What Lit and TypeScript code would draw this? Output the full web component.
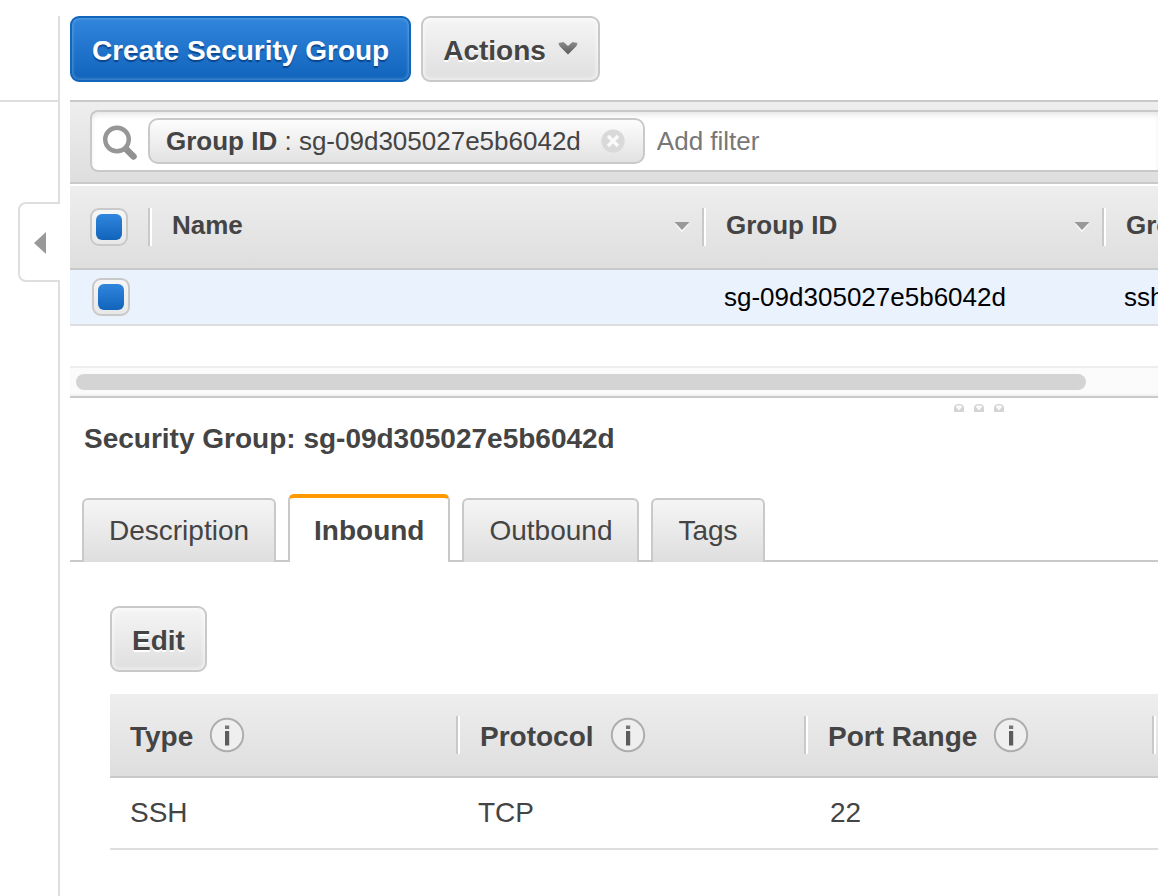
import { LitElement, html, css, svg } from "lit";
import { customElement, state } from "lit/decorators.js";
import { classMap } from "lit/directives/class-map.js";

interface Rule {
  type: string;
  protocol: string;
  ports: string;
}

const searchIcon = svg`<svg class="search-icon" viewBox="0 0 36 36" width="36" height="36" aria-hidden="true">
  <path d="M24 24 L31.500 31.500" stroke="#919191" stroke-width="6.5" stroke-linecap="round"/>
  <circle cx="15" cy="14.5" r="11.8" fill="#fff" stroke="#969696" stroke-width="4.4"/>
</svg>`;

const chevron = svg`<svg viewBox="0 0 20 14" width="20" height="14" aria-hidden="true">
  <defs><linearGradient id="chev" x1="0" y1="0" x2="0" y2="1">
    <stop offset="0" stop-color="#8c8c8c"/><stop offset="1" stop-color="#5a5a5a"/>
  </linearGradient></defs>
  <path d="M0.500 2 L5.500 1 L10 5 L14.500 1 L19.500 2 L18.500 5 L10 13.500 L1.500 5 Z" fill="url(#chev)"/>
</svg>`;

const closeIcon = svg`<svg viewBox="0 0 24 24" width="24" height="24" aria-hidden="true">
  <circle cx="12" cy="12" r="11.600" fill="#d9d9d9"/>
  <path d="M7 7 L17 17 M17 7 L7 17" stroke="#fafafa" stroke-width="3.400"/>
</svg>`;

const sortArrow = svg`<svg viewBox="0 0 16 12" width="16" height="12" aria-hidden="true">
  <path d="M0.500 2.500 H15.500 L8 11.500 Z" fill="#f8f8f8"/>
  <path d="M0.500 1 H15.500 L8 9 Z" fill="#999"/>
</svg>`;

const collapseArrow = svg`<svg viewBox="0 0 14 22" width="14" height="22" aria-hidden="true">
  <path d="M0 11 L12 0 V22 Z" fill="#999"/>
</svg>`;

const infoIcon = svg`<svg viewBox="0 0 36 36" width="36" height="36" aria-hidden="true">
  <circle cx="18" cy="18" r="16.200" fill="#efefef" stroke="#adadad" stroke-width="2"/>
  <rect x="16" y="8.500" width="4.200" height="3.500" fill="#777"/>
  <rect x="16" y="14" width="4.200" height="14.500" fill="#5c5c5c"/>
</svg>`;

const gripDot = svg`<svg viewBox="0 0 10 8" width="10" height="8" aria-hidden="true">
  <path d="M0 8 V4 Q0 0 5 0 Q10 0 10 4 V8 Z" fill="#d4d4d4"/>
  <path d="M1.500 2.500 Q5 0 8.500 2.500 L5 6.500 Z" fill="#fafafa"/>
</svg>`;

@customElement("app-root")
export class AppRoot extends LitElement {
  @state() private activeTab = "Inbound";

  private tabs = ["Description", "Inbound", "Outbound", "Tags"];
  private ruleColumns = ["Type", "Protocol", "Port Range"];
  private rules: Rule[] = [{ type: "SSH", protocol: "TCP", ports: "22" }];
  private groupId = "sg-09d305027e5b6042d";

  static styles = css`
    :host {
      --line: #c9c9c9;
      --soft-line: #dedede;
      --ink: #444;
      display: flex;
      min-height: 100vh;
      box-sizing: border-box;
      overflow: hidden;
      background: #fff;
      color: var(--ink);
      font-family: "Liberation Sans", Arial, sans-serif;
      font-size: 28px;
    }
    * {
      box-sizing: border-box;
    }
    button,
    input {
      margin: 0;
      font: inherit;
      color: inherit;
    }
    svg {
      display: block;
      flex: none;
    }

    .sidebar {
      flex: none;
      display: flex;
      flex-direction: column;
      align-items: flex-end;
      width: 60px;
      padding-top: 16px;
    }
    .rail {
      width: 100%;
      border-right: 2px solid var(--soft-line);
    }
    .rail-top {
      height: 86px;
      border-bottom: 2px solid var(--soft-line);
    }
    .rail-mid {
      height: 100px;
    }
    .rail-rest {
      flex: 1;
    }
    .collapse {
      display: flex;
      align-items: center;
      width: 42px;
      height: 80px;
      padding: 2px 0 0 14px;
      border: 2px solid var(--soft-line);
      border-right: 0;
      border-radius: 8px 0 0 8px;
      background: #fff;
    }

    .main {
      flex: 1;
      min-width: 0;
      margin-left: 10px;
      overflow: hidden;
    }

    .toolbar {
      display: flex;
      gap: 10px;
      padding: 16px 0 18px;
    }
    .btn {
      display: flex;
      align-items: center;
      gap: 12px;
      height: 66px;
      padding: 4px 20px 0;
      border: 2px solid var(--line);
      border-radius: 9px;
      background: linear-gradient(#f5f5f5, #dfdfdf);
      box-shadow: inset 0 0 4px 1px rgba(255, 255, 255, 0.7);
      font-weight: bold;
      text-shadow: 0 2px 0 #fff;
      white-space: nowrap;
    }
    .btn svg {
      margin-bottom: 6px;
    }
    .primary {
      border-color: #1166bb;
      background: linear-gradient(#3085dc, #1264bb);
      box-shadow: inset 0 0 3px 1px rgba(130, 185, 235, 0.5);
      color: #fff;
      text-shadow: 0 2px 1px rgba(0, 40, 100, 0.6);
    }

    .filter-bar {
      padding: 8px 0 10px 20px;
      border-top: 2px solid var(--line);
      border-bottom: 2px solid var(--line);
      background: linear-gradient(#eee, #dedede);
      font-size: 26px;
    }
    .filter-box {
      display: flex;
      align-items: center;
      height: 62px;
      padding: 0 0 0 10px;
      border: 2px solid var(--line);
      border-right: 0;
      border-radius: 8px 0 0 8px;
      background: #fff;
      box-shadow: inset 0 4px 6px -2px rgba(0, 0, 0, 0.12);
    }
    .search-icon {
      margin-right: 10px;
      margin-top: 3px;
    }
    .chip {
      display: flex;
      align-items: center;
      gap: 20px;
      height: 46px;
      padding: 0 18px 0 16px;
      border: 2px solid var(--line);
      border-radius: 10px;
      background: linear-gradient(#fdfdfd, #e2e2e2);
      white-space: nowrap;
    }
    .clear {
      padding: 0;
      border: 0;
      background: none;
    }
    .filter-input {
      flex: 1;
      min-width: 0;
      height: 46px;
      padding: 0 12px;
      border: 0;
      outline: 0;
      background: none;
    }
    .filter-input::placeholder {
      color: #777;
      opacity: 1;
    }

    table {
      border-collapse: separate;
      border-spacing: 0;
      table-layout: fixed;
    }
    th,
    td {
      padding: 0;
      text-align: left;
      white-space: nowrap;
    }
    th {
      padding: 22px 0;
      border-bottom: 2px solid var(--line);
      background: linear-gradient(#eee, #dedede);
    }
    .head {
      display: flex;
      justify-content: space-between;
      height: 38px;
      padding: 0 12px 0 20px;
      border-left: 2px solid #fff;
      border-right: 2px solid var(--line);
    }
    th:first-child .head {
      border-left: 0;
    }
    .head svg {
      align-self: center;
    }
    td {
      padding-left: 20px;
      border-bottom: 2px solid var(--soft-line);
    }

    .groups {
      width: 1434px;
      margin-top: 2px;
      font-size: 26px;
      line-height: 34px;
    }
    .groups td {
      height: 56px;
      background: #eaf2fe;
      color: #000;
    }
    .groups .pick {
      padding-left: 22px;
    }
    .col-pick {
      width: 80px;
    }
    .col-name {
      width: 554px;
    }
    .col-id {
      width: 400px;
    }
    .check {
      appearance: none;
      display: grid;
      place-items: center;
      width: 38px;
      height: 38px;
      border: 2px solid var(--line);
      border-radius: 9px;
      background: linear-gradient(#f6f6f6, #e8e8e8);
    }
    .check:checked::before {
      content: "";
      width: 26px;
      height: 26px;
      border-radius: 6px;
      background: linear-gradient(#3085dc, #1264bb);
    }

    .track {
      margin-top: 40px;
      padding: 6px 72px 4px 6px;
      border-top: 2px solid #eee;
      background: #fbfbfb;
      box-shadow: inset 0 -2px 0 #f3f3f3;
      height: 30px;
    }
    .thumb {
      height: 16px;
      border-radius: 8px;
      background: #d4d4d4;
    }
    .grip {
      display: flex;
      justify-content: flex-end;
      gap: 10px;
      padding: 6px 154px 0 0;
      border-top: 2px solid var(--line);
    }

    .title {
      margin: 10px 14px 0;
      font-size: 28px;
      line-height: 34px;
      white-space: nowrap;
    }
    .tabs {
      display: flex;
      align-items: flex-end;
      gap: 12px;
      margin-top: 38px;
      padding-left: 12px;
      background: linear-gradient(var(--line), var(--line)) bottom / 100% 2px
        no-repeat;
    }
    .tab {
      height: 64px;
      padding: 0 25px;
      border: 2px solid var(--line);
      border-bottom: 0;
      border-radius: 6px 6px 0 0;
      background: linear-gradient(#f5f5f5, #dedede);
      line-height: 60px;
    }
    .tab.active {
      height: 68px;
      padding: 2px 24px 0;
      border-top: 4px solid #ff9900;
      background: #fff;
      font-weight: bold;
    }

    .panel {
      padding: 44px 0 0 40px;
    }
    .rules {
      width: 1392px;
      margin-top: 22px;
      line-height: 42px;
    }
    .rules .head {
      justify-content: flex-start;
      gap: 16px;
    }
    .rules td {
      height: 72px;
    }
    .rules .ports {
      padding-left: 24px;
    }
    .info {
      display: flex;
      align-items: center;
      padding: 0;
      border: 0;
      background: none;
    }
  `;

  render() {
    return html`
      <aside class="sidebar">
        <div class="rail rail-top"></div>
        <div class="rail rail-mid"></div>
        <button class="collapse" aria-label="Collapse navigation">
          ${collapseArrow}
        </button>
        <div class="rail rail-rest"></div>
      </aside>
      <main class="main">
        <div class="toolbar">
          <button class="btn primary">Create Security Group</button>
          <button class="btn" aria-haspopup="menu">Actions ${chevron}</button>
        </div>

        <div class="filter-bar">
          <div class="filter-box">
            ${searchIcon}
            <span class="chip">
              <span><b>Group ID</b> : ${this.groupId}</span>
              <button class="clear" aria-label="Remove filter">
                ${closeIcon}
              </button>
            </span>
            <input
              class="filter-input"
              type="text"
              aria-label="Add filter"
              placeholder="Add filter"
            />
          </div>
        </div>

        <table class="groups">
          <colgroup>
            <col class="col-pick" />
            <col class="col-name" />
            <col class="col-id" />
            <col class="col-id" />
          </colgroup>
          <thead>
            <tr>
              <th>
                <div class="head">
                  <input class="check" type="checkbox" aria-label="Select all" checked />
                </div>
              </th>
              <th><div class="head">Name ${sortArrow}</div></th>
              <th><div class="head">Group ID ${sortArrow}</div></th>
              <th><div class="head">Group Name ${sortArrow}</div></th>
            </tr>
          </thead>
          <tbody>
            <tr>
              <td class="pick">
                <input class="check" type="checkbox" aria-label="Select group" checked />
              </td>
              <td></td>
              <td>${this.groupId}</td>
              <td>ssh</td>
            </tr>
          </tbody>
        </table>

        <div class="track"><div class="thumb"></div></div>
        <div class="grip">${gripDot}${gripDot}${gripDot}</div>

        <h2 class="title">Security Group: ${this.groupId}</h2>
        <div class="tabs" role="tablist">
          ${this.tabs.map(
            (tab) => html`<button
              class=${classMap({ tab: true, active: tab === this.activeTab })}
              role="tab"
              aria-selected=${tab === this.activeTab}
              @click=${() => (this.activeTab = tab)}
            >
              ${tab}
            </button>`
          )}
        </div>

        <section class="panel">
          <button class="btn">Edit</button>
          <table class="rules">
            <thead>
              <tr>
                ${this.ruleColumns.map(
                  (name) => html`<th>
                    <div class="head">
                      ${name}
                      <button class="info" aria-label="About ${name}">
                        ${infoIcon}
                      </button>
                    </div>
                  </th>`
                )}
                <th><div class="head"></div></th>
              </tr>
            </thead>
            <tbody>
              ${this.rules.map(
                (rule) => html`<tr>
                  <td>${rule.type}</td>
                  <td>${rule.protocol}</td>
                  <td class="ports">${rule.ports}</td>
                  <td></td>
                </tr>`
              )}
            </tbody>
          </table>
        </section>
      </main>
    `;
  }
}
